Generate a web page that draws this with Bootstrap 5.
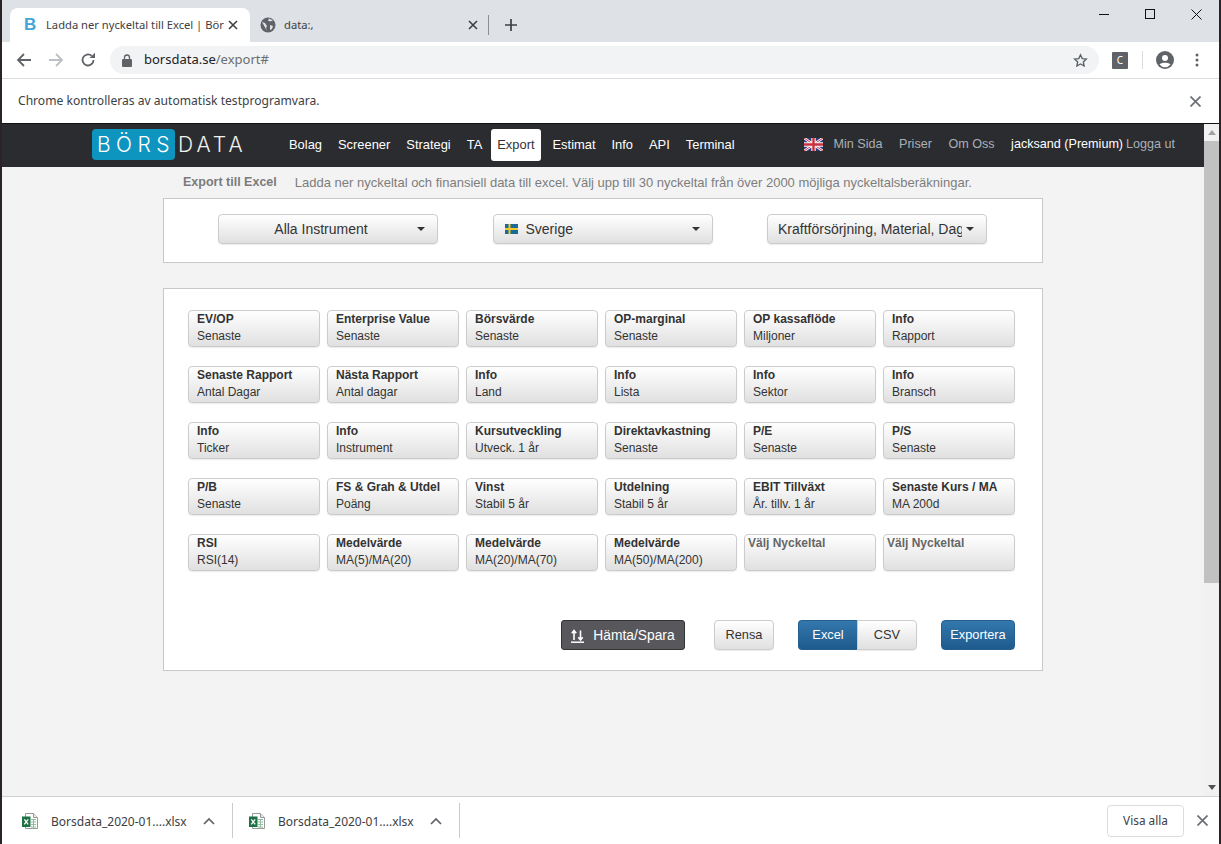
<!DOCTYPE html>
<html lang="sv">
<head>
    <title>Ladda ner nyckeltal till Excel | Börsdata</title>
    <meta charset="UTF-8">
    <meta name="viewport" content="width=device-width, initial-scale=1.0">
    <link href="https://cdn.jsdelivr.net/npm/bootstrap@5.3.2/dist/css/bootstrap.min.css" rel="stylesheet">
    <style>
        html, body { height: 100%; overflow: hidden; }
        body { background: #2b2426; font-family: "Liberation Sans", Arial, sans-serif; }

        /* browser chrome */
        .shell { height: 844px; margin: 0 2px; background: #fff; }
        .chrome-text { font-family: "Noto Sans", "Open Sans", sans-serif; color: #3c4043; }
        .tabstrip { height: 42px; background: #dee1e6; padding-left: 8px; }
        .tab-item { height: 34px; margin-top: 8px; font-size: 11.2px; }
        .tab-on { width: 240px; padding: 0 12px 0 14px; background: #fff; border-radius: 8px 8px 0 0; }
        .tab-off { width: 236px; padding: 0 8px 0 10px; }
        .tab-title { flex: 1; overflow: hidden; white-space: nowrap; }
        .tab-div { width: 1px; height: 20px; background: #8a8d91; margin: 15px 0 0 2px; }
        .tab-plus { margin: 19px 0 0 16px; }
        .fav-b { width: 16px; color: #45a5d6; font: bold 17px "Liberation Sans", sans-serif; margin-right: 6px; }
        .win-btns { margin-left: auto; }
        .win-btn { width: 46px; height: 28px; }
        .toolbar { height: 37px; padding: 0 0 0 6px; border-bottom: 1px solid #dadce0; }
        .tool-btn { width: 32px; height: 28px; }
        .omnibox { width: 989px; height: 28px; margin-left: 6px; padding: 0 11px 0 12px; background: #f1f3f4; border-radius: 14px; font-size: 13px; }
        .omni-host { margin-left: 12px; color: #202124; white-space: nowrap; }
        .omni-path { color: #6b6e72; }
        .ext-c { width: 16px; height: 17px; margin-left: 13px; background: #5f6368; color: #fff; font-size: 10px; border-radius: 1px; }
        .tool-sep { width: 1px; height: 18px; margin: 0 13px 0 14px; background: #dadce0; }
        .tool-dots { margin-left: 21px; }
        .infobar { height: 44px; padding: 0 18px 0 16px; font-size: 12.1px; }

        /* site header */
        .page-row { height: 673px; }
        .site { width: 1202px; background: #f3f3f3; }
        .site-top { height: 44px; background: #2b2c30; border-top: 1px solid #111; padding: 0 0 2px 90px; font-size: 12.9px; }
        .logo-box { height: 31px; width: 83px; padding-left: 5px; background: #0d95c0; color: #fff; border-radius: 4px; letter-spacing: 5.5px; }
        .logo-text { font-family: Inter, "Open Sans", sans-serif; font-size: 21px; font-weight: 300; line-height: 1; }
        .logo-rest { color: #f1f1f1; margin-left: 3px; width: 67px; letter-spacing: 4px; }
        .top-links { margin-left: 36px; }
        .top-link { padding: 8px; color: #fff; text-decoration: none; line-height: 16px; white-space: nowrap; }
        .top-link.top-on { background: #fff; color: #333; border-radius: 3px; padding: 8px 6px; margin: 0 4px 0 1px; }
        .top-right { margin-left: 61px; font-size: 12.6px; }
        .flag-uk { margin-right: 11px; }
        .soft-link { color: #a9b0b5; text-decoration: none; margin-right: 16.5px; white-space: nowrap; }
        .user-link { color: #fff; white-space: nowrap; }
        .out-link { color: #a9b0b5; margin-left: 3px; white-space: nowrap; }

        /* export panels */
        .intro { height: 31px; padding-left: 181px; font-size: 13px; color: #7d7d7d; white-space: nowrap; }
        .intro b { margin-right: 18px; font-size: 12.5px; color: #7b7b7b; }
        .box-panel { width: 880px; background: #fff; border: 1px solid #c8c8c8; }
        .pick-row { height: 65px; padding: 0 0 4px 54px; gap: 54.5px; }
        .grad-btn { background: linear-gradient(#fff, #e0e0e0); border: 1px solid #ccc; border-radius: 4px; color: #333; box-shadow: 0 1px 1px rgba(0,0,0,.08); }
        .pick-btn { width: 220px; height: 30px; font-size: 14px; padding: 1px 12px 0 10px; }
        .pick-label { flex: 1; overflow: hidden; white-space: nowrap; text-align: center; }
        .pick-btn.dropdown-toggle::after { margin-left: 4px; flex: none; }
        .flag-se { width: 13px; height: 10px; margin: 0 8px 0 1px; }
        .metric-panel { margin-top: 25px; padding: 21px 27px 20px 24px; }
        .metric-grid { display: grid; grid-template-columns: repeat(6, 132px); gap: 19px 7px; }
        .metric-btn { height: 37px; padding: 0 8px 2px; font-size: 12px; line-height: 17px; text-align: left; white-space: nowrap; overflow: hidden; }
        .metric-btn b, .metric-btn span { display: block; min-height: 17px; }
        .metric-blank { padding-left: 3px; }
        .metric-blank b { color: #666; }
        .actions { margin-top: 49px; height: 30px; }
        .act-btn { height: 30px; font-size: 12.8px; padding: 0; }
        .act-save { width: 124px; padding: 2px 0 0; gap: 9px; background: #58585c; border: 1px solid #333; border-radius: 3px; color: #fff; font-size: 13.8px; }
        .act-clear { width: 60px; margin-left: 29px; }
        .act-group { margin-left: 24px; }
        .act-format { width: 60px; border-radius: 0 4px 4px 0; }
        .act-blue { background: linear-gradient(#3378ae, #1f5a8c); border: 1px solid #245f90; color: #fff; }
        .act-excel { width: 59px; border-radius: 4px 0 0 4px; border-right: 0; }
        .act-export { width: 74px; margin-left: 24px; border-radius: 4px; }

        /* scrollbar and download bar */
        .scroll-rail { width: 15px; background: #f1f1f1; }
        .scroll-arrow { height: 17px; }
        .scroll-top { height: 1px; background: #111; }
        .scroll-thumb { height: 442px; background: #c1c1c1; }
        .shelf { height: 48px; border-top: 1px solid #d0d0d0; background: #fff; font-size: 12px; }
        .shelf-item { width: 227px; height: 35px; padding-left: 16px; border-right: 1px solid #c9cbcd; }
        .shelf-item:first-child { width: 231px; padding-left: 20px; }
        .shelf-name { margin: 3px 0 0 13px; width: 136px; white-space: nowrap; }
        .shelf-chev { margin-left: 16px; }
        .shelf-all { width: 77px; height: 32px; background: #fff; border: 1px solid #dadce0; border-radius: 4px; font-size: 11.8px; padding: 0; }
        .shelf-end { margin-left: auto; margin-right: 11px; gap: 13px; }
    </style>
</head>
<body>
<div class="shell d-flex flex-column">
    <div class="tabstrip d-flex chrome-text">
        <div class="tab-item tab-on d-flex align-items-center">
            <span class="fav-b">B</span>
            <span class="tab-title">Ladda ner nyckeltal till Excel | Bör</span>
            <svg class="ms-1" width="10" height="10" viewBox="0 0 10 10"><path d="M1 1l8 8M9 1l-8 8" stroke="#3c4043" stroke-width="1.6"/></svg>
        </div>
        <div class="tab-item tab-off d-flex align-items-center">
            <svg class="me-2 flex-shrink-0" width="16" height="16" viewBox="0 0 16 16"><circle cx="8" cy="8" r="7.5" fill="#5f6368"/><path d="M2 5l3 1 2 3-1 2 1 3M9 1.500l-1 2 2 1 3-1M10 8l3 1-1 3-2 1z" fill="#dee1e6"/></svg>
            <span class="tab-title">data:,</span>
            <svg class="ms-2" width="10" height="10" viewBox="0 0 10 10"><path d="M1 1l8 8M9 1l-8 8" stroke="#3c4043" stroke-width="1.6"/></svg>
        </div>
        <div class="tab-div"></div>
        <svg class="tab-plus" width="12" height="12" viewBox="0 0 12 12"><path d="M6 0v12M0 6h12" stroke="#3c4043" stroke-width="1.7"/></svg>
        <div class="win-btns d-flex">
            <div class="win-btn d-flex align-items-center justify-content-center"><svg width="10" height="10" viewBox="0 0 10 10"><path d="M0 5.500h10" stroke="#111"/></svg></div>
            <div class="win-btn d-flex align-items-center justify-content-center"><svg width="10" height="10" viewBox="0 0 10 10"><rect x=".5" y=".5" width="9" height="9" fill="none" stroke="#111"/></svg></div>
            <div class="win-btn d-flex align-items-center justify-content-center"><svg width="11" height="11" viewBox="0 0 11 11"><path d="M.5.5l10 10M10.500.5l-10 10" stroke="#111"/></svg></div>
        </div>
    </div>

    <div class="toolbar d-flex align-items-center chrome-text">
        <div class="tool-btn d-flex align-items-center justify-content-center"><svg width="16" height="16" viewBox="0 0 16 16"><path d="M15 8H2M8 2L2 8l6 6" fill="none" stroke="#5f6368" stroke-width="1.8"/></svg></div>
        <div class="tool-btn d-flex align-items-center justify-content-center"><svg width="16" height="16" viewBox="0 0 16 16"><path d="M1 8h13M8 2l6 6-6 6" fill="none" stroke="#bcbfc3" stroke-width="1.8"/></svg></div>
        <div class="tool-btn d-flex align-items-center justify-content-center"><svg width="16" height="16" viewBox="0 0 16 16"><path d="M13.500 8A5.500 5.500 0 1 1 11.600 3.800" fill="none" stroke="#5f6368" stroke-width="1.8"/><path d="M9.500 6H15V.8z" fill="#5f6368"/></svg></div>
        <div class="omnibox d-flex align-items-center">
            <svg width="10" height="13" viewBox="0 0 10 13"><path d="M2.500 5V3.500a2.500 2.500 0 0 1 5 0V5" fill="none" stroke="#5f6368" stroke-width="1.3"/><rect y="5" width="10" height="8" rx="1" fill="#5f6368"/></svg>
            <span class="omni-host">borsdata.se<span class="omni-path">/export#</span></span>
            <svg class="ms-auto" width="15" height="15" viewBox="0 0 24 24"><path d="M12 3l2.800 6 6.500.8-4.800 4.500 1.300 6.500L12 17.500 6.200 20.800l1.300-6.500L2.700 9.800 9.200 9z" fill="none" stroke="#5f6368" stroke-width="2.2"/></svg>
        </div>
        <div class="ext-c d-flex align-items-center justify-content-center">C</div>
        <div class="tool-sep"></div>
        <svg width="18" height="18" viewBox="0 0 18 18"><circle cx="9" cy="9" r="9" fill="#5f6368"/><circle cx="9" cy="7" r="3" fill="#fff"/><path d="M3.500 13.500c1.500-2.500 9.500-2.500 11 0a7 7 0 0 1-11 0z" fill="#fff"/></svg>
        <svg class="tool-dots" width="4" height="14" viewBox="0 0 4 14"><circle cx="2" cy="2" r="1.500" fill="#5f6368"/><circle cx="2" cy="7" r="1.500" fill="#5f6368"/><circle cx="2" cy="12" r="1.500" fill="#5f6368"/></svg>
    </div>

    <div class="infobar d-flex align-items-center justify-content-between chrome-text">
        <span>Chrome kontrolleras av automatisk testprogramvara.</span>
        <svg width="11" height="11" viewBox="0 0 11 11"><path d="M.5.5l10 10M10.500.5l-10 10" stroke="#6c6f73" stroke-width="1.7"/></svg>
    </div>

    <div class="page-row d-flex">
        <div class="site">
            <nav class="site-top d-flex align-items-center">
                <div class="logo-box logo-text d-flex align-items-center justify-content-center">BÖRS</div>
                <div class="logo-rest logo-text">DATA</div>
                <div class="top-links d-flex align-items-center">
                    <a class="top-link" href="#">Bolag</a>
                    <a class="top-link" href="#">Screener</a>
                    <a class="top-link" href="#">Strategi</a>
                    <a class="top-link" href="#">TA</a>
                    <a class="top-link top-on" href="#">Export</a>
                    <a class="top-link" href="#">Estimat</a>
                    <a class="top-link" href="#">Info</a>
                    <a class="top-link" href="#">API</a>
                    <a class="top-link" href="#">Terminal</a>
                </div>
                <div class="top-right d-flex align-items-center">
                    <svg class="flag-uk" width="19" height="13" viewBox="0 0 19 13"><rect width="19" height="13" fill="#2b3a7a"/><path d="M0 0l19 13M19 0L0 13" stroke="#fff" stroke-width="2.6"/><path d="M0 0l19 13M19 0L0 13" stroke="#c8313e" stroke-width="1"/><path d="M9.500 0v13M0 6.500h19" stroke="#fff" stroke-width="4.3"/><path d="M9.500 0v13M0 6.500h19" stroke="#c8313e" stroke-width="2.4"/></svg>
                    <a class="soft-link" href="#">Min Sida</a>
                    <a class="soft-link" href="#">Priser</a>
                    <a class="soft-link" href="#">Om Oss</a>
                    <span class="user-link">jacksand (Premium)</span>
                    <span class="out-link">Logga ut</span>
                </div>
            </nav>

            <div class="intro d-flex align-items-center"><b>Export till Excel</b><span>Ladda ner nyckeltal och finansiell data till excel. Välj upp till 30 nyckeltal från över 2000 möjliga nyckeltalsberäkningar.</span></div>

            <div class="box-panel mx-auto pick-row d-flex align-items-center">
                <button class="grad-btn pick-btn dropdown-toggle d-flex align-items-center" type="button"><span class="pick-label">Alla Instrument</span></button>
                <button class="grad-btn pick-btn dropdown-toggle d-flex align-items-center" type="button">
                    <span class="pick-label d-flex align-items-center">
                        <svg class="flag-se" viewBox="0 0 13 10"><rect width="13" height="10" fill="#1b6a94"/><path d="M4.500 0v10M0 5h13" stroke="#f3c62b" stroke-width="2"/></svg>Sverige
                    </span>
                </button>
                <button class="grad-btn pick-btn dropdown-toggle d-flex align-items-center" type="button"><span class="pick-label text-start">Kraftförsörjning, Material, Dagligvaror</span></button>
            </div>

            <div class="box-panel metric-panel mx-auto">
                <div class="metric-grid" id="metrics"></div>
                <div class="actions d-flex justify-content-end">
                    <button class="act-btn act-save d-flex align-items-center justify-content-center" type="button">
                        <svg width="13" height="14" viewBox="0 0 13 14"><path d="M3 11V2M.8 4.200L3 1.500l2.200 2.700M9.500 1.500V11M7.300 8.300L9.500 11l2.200-2.700" fill="none" stroke="#fff" stroke-width="1.6"/><path d="M0 13.200h13" stroke="#fff" stroke-width="1.5"/></svg>Hämta/Spara
                    </button>
                    <button class="grad-btn act-btn act-clear" type="button">Rensa</button>
                    <div class="act-group d-flex">
                        <button class="act-btn act-blue act-excel" type="button">Excel</button>
                        <button class="grad-btn act-btn act-format" type="button">CSV</button>
                    </div>
                    <button class="act-btn act-blue act-export" type="button">Exportera</button>
                </div>
            </div>
        </div>
        <div class="scroll-rail d-flex flex-column">
            <div class="scroll-top"></div>
            <div class="scroll-arrow d-flex align-items-center justify-content-center"><svg width="8" height="5" viewBox="0 0 8 5"><path d="M4 0l4 5H0z" fill="#a3a3a3"/></svg></div>
            <div class="scroll-thumb"></div>
            <div class="scroll-arrow d-flex align-items-center justify-content-center mt-auto"><svg width="8" height="5" viewBox="0 0 8 5"><path d="M4 5L0 0h8z" fill="#505050"/></svg></div>
        </div>
    </div>

    <div class="shelf d-flex align-items-center chrome-text" id="shelf">
        <div class="shelf-end d-flex align-items-center">
            <button class="shelf-all chrome-text" type="button">Visa alla</button>
            <svg width="11" height="11" viewBox="0 0 11 11"><path d="M.5.5l10 10M10.500.5l-10 10" stroke="#6c6f73" stroke-width="1.7"/></svg>
        </div>
    </div>
</div>

<script src="https://cdn.jsdelivr.net/npm/bootstrap@5.3.2/dist/js/bootstrap.bundle.min.js"></script>
<script>
    const metrics = [
        ['EV/OP', 'Senaste'], ['Enterprise Value', 'Senaste'], ['Börsvärde', 'Senaste'], ['OP-marginal', 'Senaste'], ['OP kassaflöde', 'Miljoner'], ['Info', 'Rapport'],
        ['Senaste Rapport', 'Antal Dagar'], ['Nästa Rapport', 'Antal dagar'], ['Info', 'Land'], ['Info', 'Lista'], ['Info', 'Sektor'], ['Info', 'Bransch'],
        ['Info', 'Ticker'], ['Info', 'Instrument'], ['Kursutveckling', 'Utveck. 1 år'], ['Direktavkastning', 'Senaste'], ['P/E', 'Senaste'], ['P/S', 'Senaste'],
        ['P/B', 'Senaste'], ['FS & Grah & Utdel', 'Poäng'], ['Vinst', 'Stabil 5 år'], ['Utdelning', 'Stabil 5 år'], ['EBIT Tillväxt', 'År. tillv. 1 år'], ['Senaste Kurs / MA', 'MA 200d'],
        ['RSI', 'RSI(14)'], ['Medelvärde', 'MA(5)/MA(20)'], ['Medelvärde', 'MA(20)/MA(70)'], ['Medelvärde', 'MA(50)/MA(200)'], ['Välj Nyckeltal', ''], ['Välj Nyckeltal', '']
    ];
    const grid = document.getElementById('metrics');
    metrics.forEach(([name, sub]) => {
        const btn = document.createElement('button');
        btn.type = 'button';
        btn.className = 'grad-btn metric-btn' + (sub ? '' : ' metric-blank');
        const b = document.createElement('b');
        b.textContent = name;
        const s = document.createElement('span');
        s.textContent = sub;
        btn.append(b, s);
        grid.appendChild(btn);
    });

    const excelIcon = '<svg width="16" height="16" viewBox="0 0 16 16"><path d="M3.500.5h8l4 4v11h-12z" fill="#fff" stroke="#9a9a9a"/><path d="M11.500.5v4h4" fill="#e8e8e8" stroke="#9a9a9a"/><path d="M9 6.500h5M9 9h5M9 11.500h5M9 14h5M11.500 6v8.500" stroke="#8fbf9f"/><rect y="3.500" width="8.500" height="10.500" fill="#1e7145"/><path d="M2.300 6.300l3.900 5M6.200 6.300l-3.900 5" stroke="#fff" stroke-width="1.3"/></svg>';
    const chevron = '<svg class="shelf-chev" width="12" height="8" viewBox="0 0 12 8"><path d="M1 7l5-5 5 5" fill="none" stroke="#5f6368" stroke-width="1.7"/></svg>';
    const shelf = document.getElementById('shelf');
    const shelfEnd = shelf.firstElementChild;
    [0, 1].forEach(() => {
        const item = document.createElement('div');
        item.className = 'shelf-item d-flex align-items-center';
        item.innerHTML = excelIcon + '<span class="shelf-name">Borsdata_2020-01....xlsx</span>' + chevron;
        shelf.insertBefore(item, shelfEnd);
    });
</script>
</body>
</html>
